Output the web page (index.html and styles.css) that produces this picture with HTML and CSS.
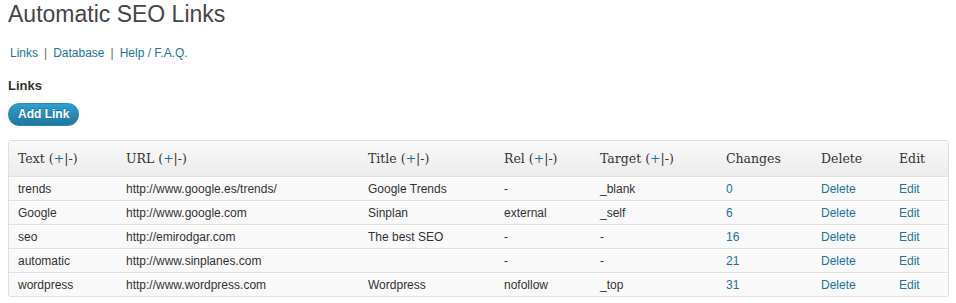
FILE: index.html
```html
<!DOCTYPE html>
<html lang="en">
<head>
  <meta charset="UTF-8" />
  <title>Automatic SEO Links</title>
  <link rel="stylesheet" href="styles.css">
</head>
<body>
  <div class="wrap">
    <h2 class="page-title">Automatic SEO Links</h2>

    <ul class="subnav">
      <li><a href="#">Links</a></li>
      <li class="sep">|</li>
      <li><a href="#">Database</a></li>
      <li class="sep">|</li>
      <li><a href="#">Help / F.A.Q.</a></li>
    </ul>

    <h3 class="section-title">Links</h3>
    <a href="#" class="btn-primary">Add Link</a>

    <table class="links-table">
      <colgroup>
        <col style="width:108px">
        <col style="width:242px">
        <col style="width:136px">
        <col style="width:96px">
        <col style="width:126px">
        <col style="width:95px">
        <col style="width:78px">
        <col>
      </colgroup>
      <thead>
        <tr>
          <th>Text <span class="sort">(<a href="#">+</a>|<a href="#" class="minus">-</a>)</span></th>
          <th>URL <span class="sort">(<a href="#">+</a>|<a href="#" class="minus">-</a>)</span></th>
          <th>Title <span class="sort">(<a href="#">+</a>|<a href="#" class="minus">-</a>)</span></th>
          <th>Rel <span class="sort">(<a href="#">+</a>|<a href="#" class="minus">-</a>)</span></th>
          <th>Target <span class="sort">(<a href="#">+</a>|<a href="#" class="minus">-</a>)</span></th>
          <th>Changes</th>
          <th>Delete</th>
          <th>Edit</th>
        </tr>
      </thead>
      <tbody>
        <tr>
          <td>trends</td>
          <td>http://www.google.es/trends/</td>
          <td>Google Trends</td>
          <td>-</td>
          <td>_blank</td>
          <td><a href="#">0</a></td>
          <td><a href="#">Delete</a></td>
          <td><a href="#">Edit</a></td>
        </tr>
        <tr>
          <td>Google</td>
          <td>http://www.google.com</td>
          <td>Sinplan</td>
          <td>external</td>
          <td>_self</td>
          <td><a href="#">6</a></td>
          <td><a href="#">Delete</a></td>
          <td><a href="#">Edit</a></td>
        </tr>
        <tr>
          <td>seo</td>
          <td>http://emirodgar.com</td>
          <td>The best SEO</td>
          <td>-</td>
          <td>-</td>
          <td><a href="#">16</a></td>
          <td><a href="#">Delete</a></td>
          <td><a href="#">Edit</a></td>
        </tr>
        <tr>
          <td>automatic</td>
          <td>http://www.sinplanes.com</td>
          <td></td>
          <td>-</td>
          <td>-</td>
          <td><a href="#">21</a></td>
          <td><a href="#">Delete</a></td>
          <td><a href="#">Edit</a></td>
        </tr>
        <tr>
          <td>wordpress</td>
          <td>http://www.wordpress.com</td>
          <td>Wordpress</td>
          <td>nofollow</td>
          <td>_top</td>
          <td><a href="#">31</a></td>
          <td><a href="#">Delete</a></td>
          <td><a href="#">Edit</a></td>
        </tr>
      </tbody>
    </table>
  </div>
</body>
</html>
```

FILE: styles.css
```css
body {
  margin: 0;
  padding: 0;
  background-color: #fff;
  font-family: "Liberation Sans", Arial, sans-serif;
  font-size: 12px;
  color: #333;
}

a {
  color: #21759b;
  text-decoration: none;
}

.wrap {
  padding: 0 7px 0 8px;
}

.page-title {
  margin: 0;
  padding: 0;
  font-size: 23px;
  font-weight: normal;
  line-height: 29px;
  color: #464646;
}

.subnav {
  list-style: none;
  display: flex;
  gap: 6px;
  margin: 16px 0 0 2px;
  padding: 0;
  font-size: 12px;
  line-height: 16px;
}

.subnav .sep {
  color: #666;
}

.section-title {
  margin: 16px 0 0;
  font-size: 13px;
  font-weight: bold;
  line-height: 17px;
  color: #333;
}

.btn-primary {
  display: block;
  width: fit-content;
  margin-top: 9px;
  height: 23px;
  padding: 0 9px;
  box-sizing: border-box;
  border-radius: 11px;
  border: 1px solid #298cba;
  background: linear-gradient(to bottom, #2e9fd2, #21759b);
  color: #fff;
  font-weight: bold;
  font-size: 12px;
  line-height: 21px;
  white-space: nowrap;
  text-shadow: 0 -1px 0 rgba(0, 0, 0, 0.3);
}

.links-table {
  margin-top: 14px;
  width: 941px;
  table-layout: fixed;
  border-collapse: separate;
  border-spacing: 0;
  border: 1px solid #dfdfdf;
  border-radius: 3px;
  background-color: #f9f9f9;
}

.links-table th {
  height: 35px;
  padding: 0 9px;
  text-align: left;
  font-family: "DejaVu Serif", Georgia, serif;
  font-size: 12.5px;
  font-weight: normal;
  color: #333;
  background: linear-gradient(to bottom, #f9f9f9, #ececec);
  border-bottom: 1px solid #dfdfdf;
  white-space: nowrap;
}

.links-table .sort a {
  color: #21759b;
}

.links-table .sort a.minus {
  color: #333;
}

.links-table td {
  height: 22px;
  padding: 0 9px;
  border-top: 1px solid #fff;
  border-bottom: 1px solid #dfdfdf;
  white-space: nowrap;
  vertical-align: middle;
}

.links-table tbody tr:last-child td {
  border-bottom: none;
}
```
